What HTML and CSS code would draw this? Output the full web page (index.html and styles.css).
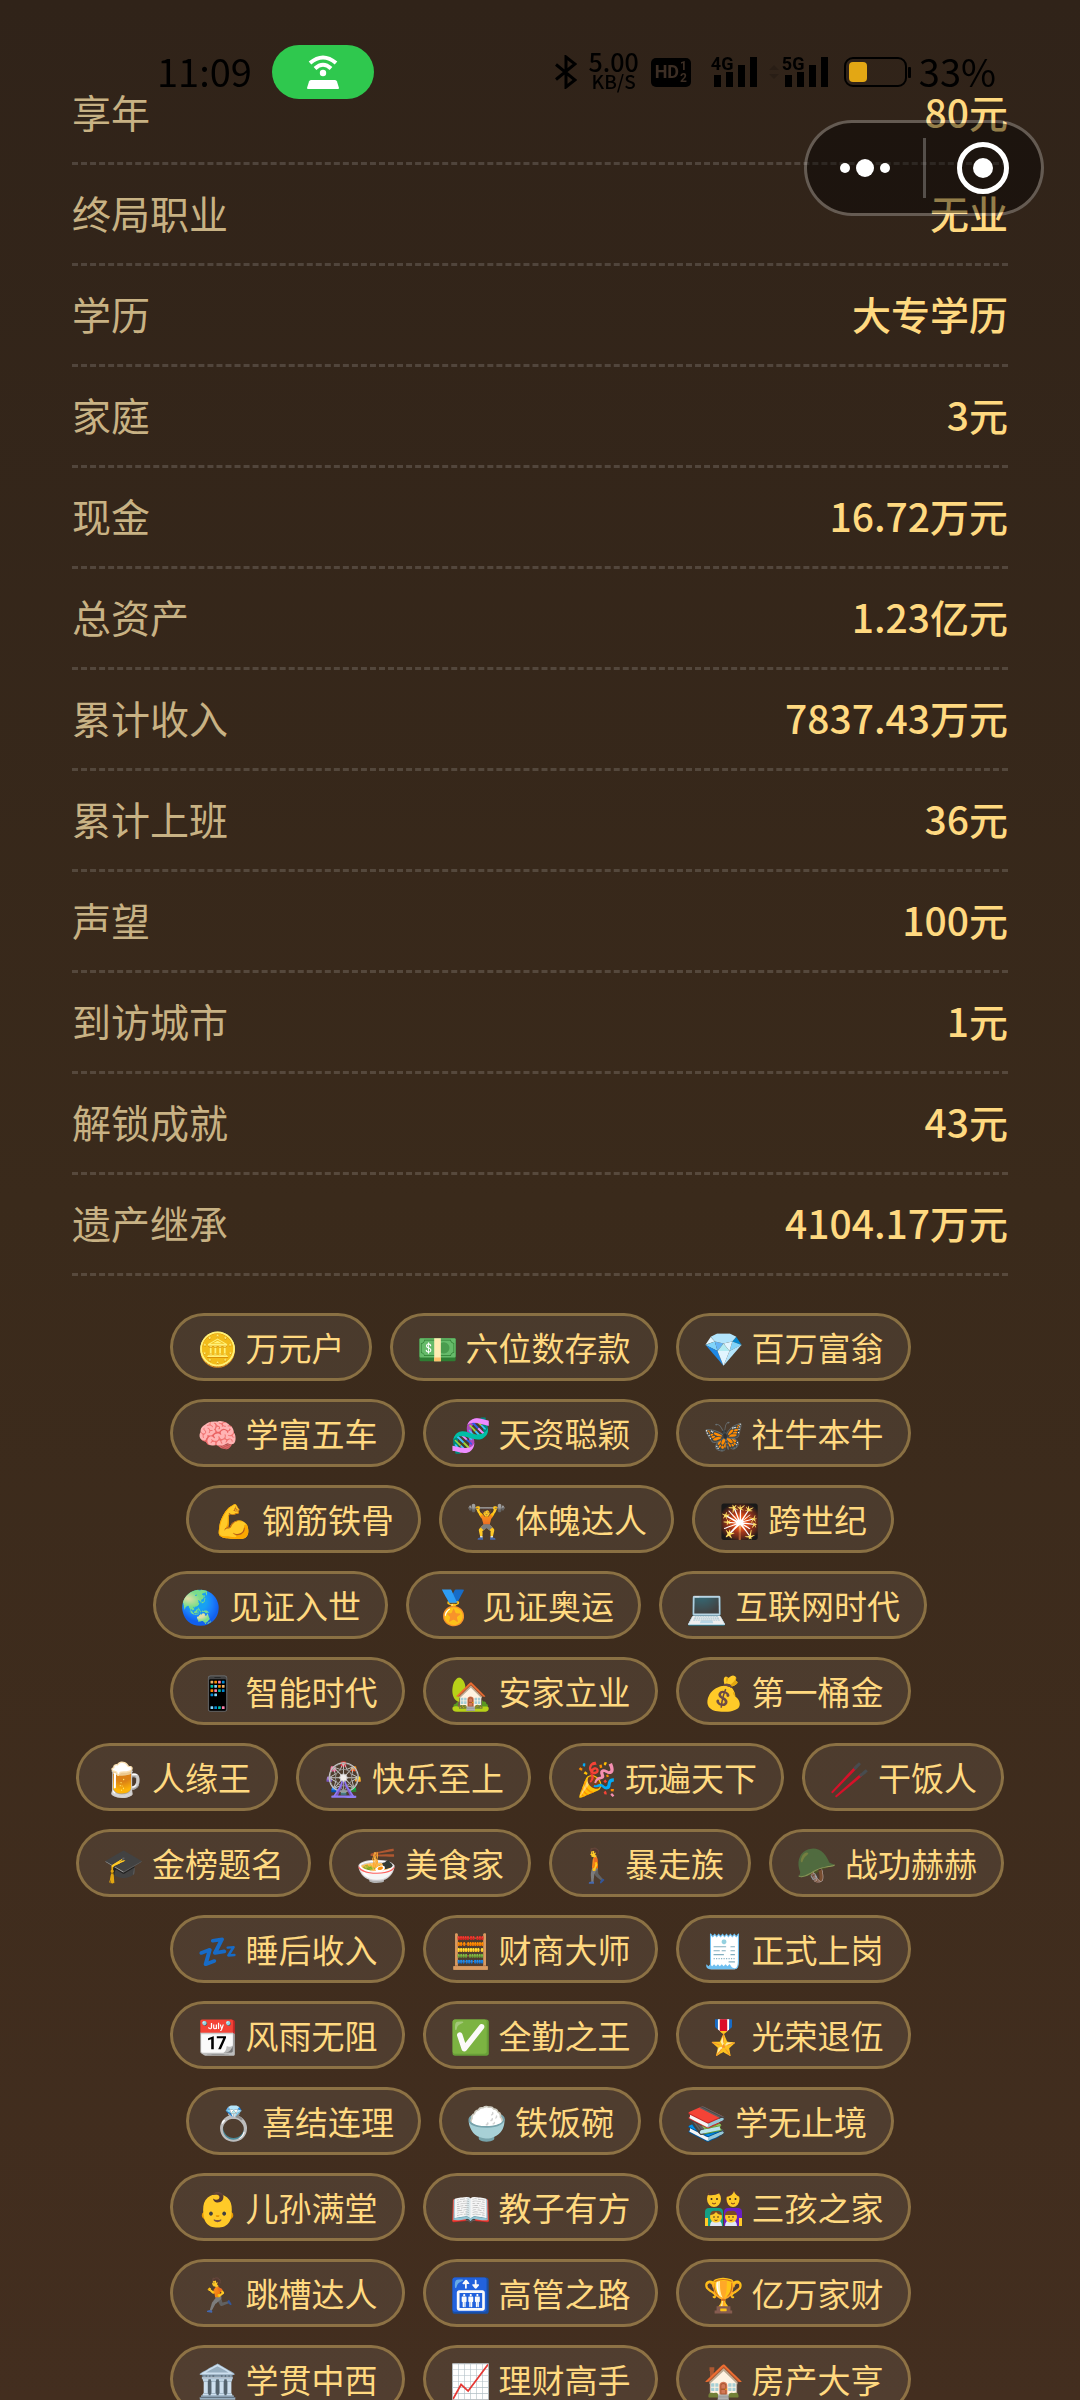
FILE: index.html
```
<!DOCTYPE html>
<html lang="zh-CN">
<head>
<meta charset="utf-8">
<meta name="viewport" content="width=device-width, initial-scale=1">
<title>人生总结</title>
<link rel="stylesheet" href="styles.css">
</head>
<body>
<header class="status">
  <span class="time">11:09</span>
  <span class="hotspot">
    <svg width="34" height="36" viewBox="0 0 34 36" fill="none" stroke="#fff" stroke-width="4"><path d="M4 9Q17-2 30 9M9 14.500Q17 7 25 14.500"/><circle cx="17" cy="19" r="3.200" fill="#fff" stroke="none"/><path d="M5 26H29Q30.500 26 31 27.500L33 34Q33 35 32 35H2Q1 35 1 34L3 27.500Q3.500 26 5 26Z" fill="#fff" stroke="none"/></svg>
  </span>
  <div class="indicators">
    <svg width="22" height="34" viewBox="0 0 22 34" fill="none" stroke="#000" stroke-width="3"><path d="M1 9.500L20 25L11 32V2L20 9L1 24.500"/></svg>
    <span class="rate"><b>5.00</b><small>KB/S</small></span>
    <span class="hd"><b>HD</b><span><i>1</i><i>2</i></span></span>
    <span class="signal"><b>4G</b><svg width="43" height="30" viewBox="0 0 43 30"><path d="M0 18h7v12H0zM12 15h7v15h-7zM24 8h7v22h-7zM36 0h7v30h-7z"/></svg></span>
    <svg class="traffic" width="10" height="14" viewBox="0 0 10 14"><path d="M0 5l5-5 5 5zM0 9h10l-5 5z"/></svg>
    <span class="signal"><b>5G</b><svg width="43" height="30" viewBox="0 0 43 30"><path d="M0 18h7v12H0zM12 15h7v15h-7zM24 8h7v22h-7zM36 0h7v30h-7z"/></svg></span>
    <svg class="battery" width="67" height="30" viewBox="0 0 67 30"><rect x="1" y="1" width="61" height="28" rx="8" fill="none" stroke="#000" stroke-width="2"/><rect x="5" y="5" width="18" height="20" rx="4" fill="#e3a714"/><rect x="64" y="10" width="3" height="11" rx="1" fill="#000"/></svg>
    <span class="percent">33%</span>
  </div>
</header>

<div class="capsule">
  <button type="button" aria-label="更多"><svg width="52" height="52" viewBox="0 0 52 52" fill="#fff"><circle cx="6" cy="26" r="5"/><circle cx="26" cy="26" r="9"/><circle cx="46" cy="26" r="5"/></svg></button>
  <button type="button" aria-label="关闭"><svg width="52" height="52" viewBox="0 0 52 52"><circle cx="26" cy="26" r="23.500" fill="none" stroke="#fff" stroke-width="5"/><circle cx="26" cy="26" r="10" fill="#fff"/></svg></button>
</div>

<main class="summary">
  <dl class="stats">
    <div><dt>享年</dt><dd>80元</dd></div>
    <div><dt>终局职业</dt><dd>无业</dd></div>
    <div><dt>学历</dt><dd>大专学历</dd></div>
    <div><dt>家庭</dt><dd>3元</dd></div>
    <div><dt>现金</dt><dd>16.72万元</dd></div>
    <div><dt>总资产</dt><dd>1.23亿元</dd></div>
    <div><dt>累计收入</dt><dd>7837.43万元</dd></div>
    <div><dt>累计上班</dt><dd>36元</dd></div>
    <div><dt>声望</dt><dd>100元</dd></div>
    <div><dt>到访城市</dt><dd>1元</dd></div>
    <div><dt>解锁成就</dt><dd>43元</dd></div>
    <div><dt>遗产继承</dt><dd>4104.17万元</dd></div>
  </dl>
  <ul class="badges">
    <li><i>🪙</i>万元户</li>
    <li><i>💵</i>六位数存款</li>
    <li><i>💎</i>百万富翁</li>
    <li><i>🧠</i>学富五车</li>
    <li><i>🧬</i>天资聪颖</li>
    <li><i>🦋</i>社牛本牛</li>
    <li><i>💪</i>钢筋铁骨</li>
    <li><i>🏋️</i>体魄达人</li>
    <li><i>🎇</i>跨世纪</li>
    <li><i>🌏</i>见证入世</li>
    <li><i>🏅</i>见证奥运</li>
    <li><i>💻</i>互联网时代</li>
    <li><i>📱</i>智能时代</li>
    <li><i>🏡</i>安家立业</li>
    <li><i>💰</i>第一桶金</li>
    <li><i>🍺</i>人缘王</li>
    <li><i>🎡</i>快乐至上</li>
    <li><i>🎉</i>玩遍天下</li>
    <li><i>🥢</i>干饭人</li>
    <li><i>🎓</i>金榜题名</li>
    <li><i>🍜</i>美食家</li>
    <li><i>🚶</i>暴走族</li>
    <li><i>🪖</i>战功赫赫</li>
    <li><i>💤</i>睡后收入</li>
    <li><i>🧮</i>财商大师</li>
    <li><i>🧾</i>正式上岗</li>
    <li><i>📆</i>风雨无阻</li>
    <li><i>✅</i>全勤之王</li>
    <li><i>🎖️</i>光荣退伍</li>
    <li><i>💍</i>喜结连理</li>
    <li><i>🍚</i>铁饭碗</li>
    <li><i>📚</i>学无止境</li>
    <li><i>👶</i>儿孙满堂</li>
    <li><i>📖</i>教子有方</li>
    <li><i><svg width="37" height="37" viewBox="0 0 37 37"><path d="M0 37V23q0-4 4-4h10q4 0 4 4v14z" fill="#14a085"/><path d="M19 37V23q0-4 4-4h10q4 0 4 4v14z" fill="#6a1fc4"/><path d="M0 29h3v8H0zM34 29h3v8h-3z" fill="#ffca28"/><path d="M2 10C1 3 4 0 9 0s8 3 7 10zM20 18C19 6 22 0 27 0s9 5 8 18z" fill="#543930"/><ellipse cx="9" cy="10" rx="7" ry="8" fill="#ffca28"/><ellipse cx="28" cy="10" rx="6.500" ry="8" fill="#ffca28"/><path d="M3 6q6 1 12-2l-1-2H4zM21 8q7-1 8-6q1 4 6 6l-2-6H23z" fill="#543930"/><path d="M5 37q0-6 6-6t6 6zM20 37q0-6 6-6t6 6z" fill="#e1e6f5"/><ellipse cx="11" cy="28" rx="6" ry="5.500" fill="#ffca28"/><ellipse cx="26" cy="28" rx="6" ry="5.500" fill="#ffca28"/><path d="M5 26q1-5 6-4q5-1 6 4q-4 0-6-3q-2 3-6 3zM20 26q1-5 6-4q5-1 6 4q-6 0-12 0z" fill="#7a4a26"/><g fill="#3a2a22"><circle cx="6.500" cy="10" r="1"/><circle cx="12" cy="10" r="1"/><circle cx="25" cy="10" r="1"/><circle cx="30.500" cy="10" r="1"/><circle cx="9" cy="28" r=".8"/><circle cx="13" cy="28" r=".8"/><circle cx="24" cy="28" r=".8"/><circle cx="28" cy="28" r=".8"/></g><path d="M7 14q2 2 4 0M26 14q2 2 4 0M9.500 31q1.500 1 3 0M24.500 31q1.500 1 3 0" fill="none" stroke="#7a3b20"/></svg></i>三孩之家</li>
    <li><i>🏃</i>跳槽达人</li>
    <li><i>🛗</i>高管之路</li>
    <li><i>🏆</i>亿万家财</li>
    <li><i>🏛️</i>学贯中西</li>
    <li><i>📈</i>理财高手</li>
    <li><i>🏠</i>房产大亨</li>
  </ul>
</main>
</body>
</html>
```
FILE: styles.css
```
* { box-sizing: border-box; }

body {
  margin: 0;
  height: 100vh;
  overflow: hidden;
  background: linear-gradient(#302319, #3a2a1b 50%, #432e1f);
  font-family: "Noto Sans CJK SC", sans-serif;
}

/* System status bar, drawn over the scrolled page */
.status {
  position: fixed;
  top: 0;
  left: 0;
  right: 0;
  display: flex;
  align-items: center;
  gap: 20px;
  height: 144px;
  padding: 0 84px 0 157px;
  color: #000;
}
.time,
.percent {
  padding-bottom: 3px;
  font-size: 38px;
  line-height: 54px;
}
.hotspot {
  display: flex;
  align-items: center;
  justify-content: center;
  width: 102px;
  height: 54px;
  border-radius: 27px;
  background: #2fc84e;
}
.indicators {
  display: flex;
  align-items: center;
  gap: 12px;
  margin-left: auto;
}
.rate {
  display: flex;
  flex-direction: column;
  align-items: center;
  padding-bottom: 3px;
}
.rate b { font-size: 25px; line-height: 20px; font-weight: 500; }
.rate small { font-size: 19px; line-height: 19px; font-weight: 500; }
.hd {
  display: flex;
  align-items: center;
  justify-content: center;
  gap: 1px;
  width: 40px;
  height: 29px;
  margin-right: 8px;
  border-radius: 5px;
  background: #000;
  color: #3c2e24;
  font-family: Roboto, sans-serif;
}
.hd b { font-size: 18px; line-height: 24px; }
.hd span { display: flex; flex-direction: column; }
.hd i { font-size: 12px; line-height: 12px; font-style: normal; font-weight: 700; }
.signal {
  display: grid;
  align-items: end;
  justify-items: end;
  width: 46px;
}
.signal b,
.signal svg { grid-area: 1 / 1; }
.signal b {
  align-self: start;
  justify-self: start;
  font: 700 18px/14px Roboto, sans-serif;
}
.traffic { margin-right: -9px; opacity: .15; }
.battery { margin-left: 4px; }
.percent { margin-left: -4px; }

/* Mini-program menu capsule */
.capsule {
  position: fixed;
  top: 120px;
  right: 36px;
  display: flex;
  align-items: center;
  width: 240px;
  height: 96px;
  border: 3px solid rgba(255, 255, 255, .25);
  border-radius: 48px;
  background: rgba(0, 0, 0, .42);
  background-clip: padding-box;
}
.capsule button {
  display: flex;
  flex: 1;
  align-items: center;
  justify-content: center;
  height: 60px;
  padding: 0;
  border: 0;
  background: none;
}
.capsule button + button { border-left: 3px solid rgba(255, 255, 255, .25); }

.summary { padding: 64px 72px 0; }

.stats { margin: 0; }
.stats div {
  display: flex;
  align-items: center;
  justify-content: space-between;
  height: 101px;
  padding-bottom: 4px;
  border-bottom: 3px dashed rgba(255, 255, 255, .15);
  font-size: 39px;
}
.stats dt { color: #c8b284; }
.stats dd { margin: 0; color: #ffd980; font-weight: 500; }

.badges {
  display: flex;
  flex-wrap: wrap;
  justify-content: center;
  gap: 18px;
  margin: 37px 0 0;
  padding: 0;
  list-style: none;
}
.badges li {
  display: flex;
  align-items: center;
  gap: 8px;
  height: 68px;
  padding: 0 24px;
  border: 3px solid rgba(255, 217, 128, .4);
  border-radius: 34px;
  background: rgba(255, 255, 255, .08);
  background-clip: padding-box;
  color: #ffd980;
  font-size: 33px;
  white-space: nowrap;
}
.badges i {
  display: flex;
  align-items: center;
  justify-content: center;
  width: 41px;
  font-style: normal;
}
```
